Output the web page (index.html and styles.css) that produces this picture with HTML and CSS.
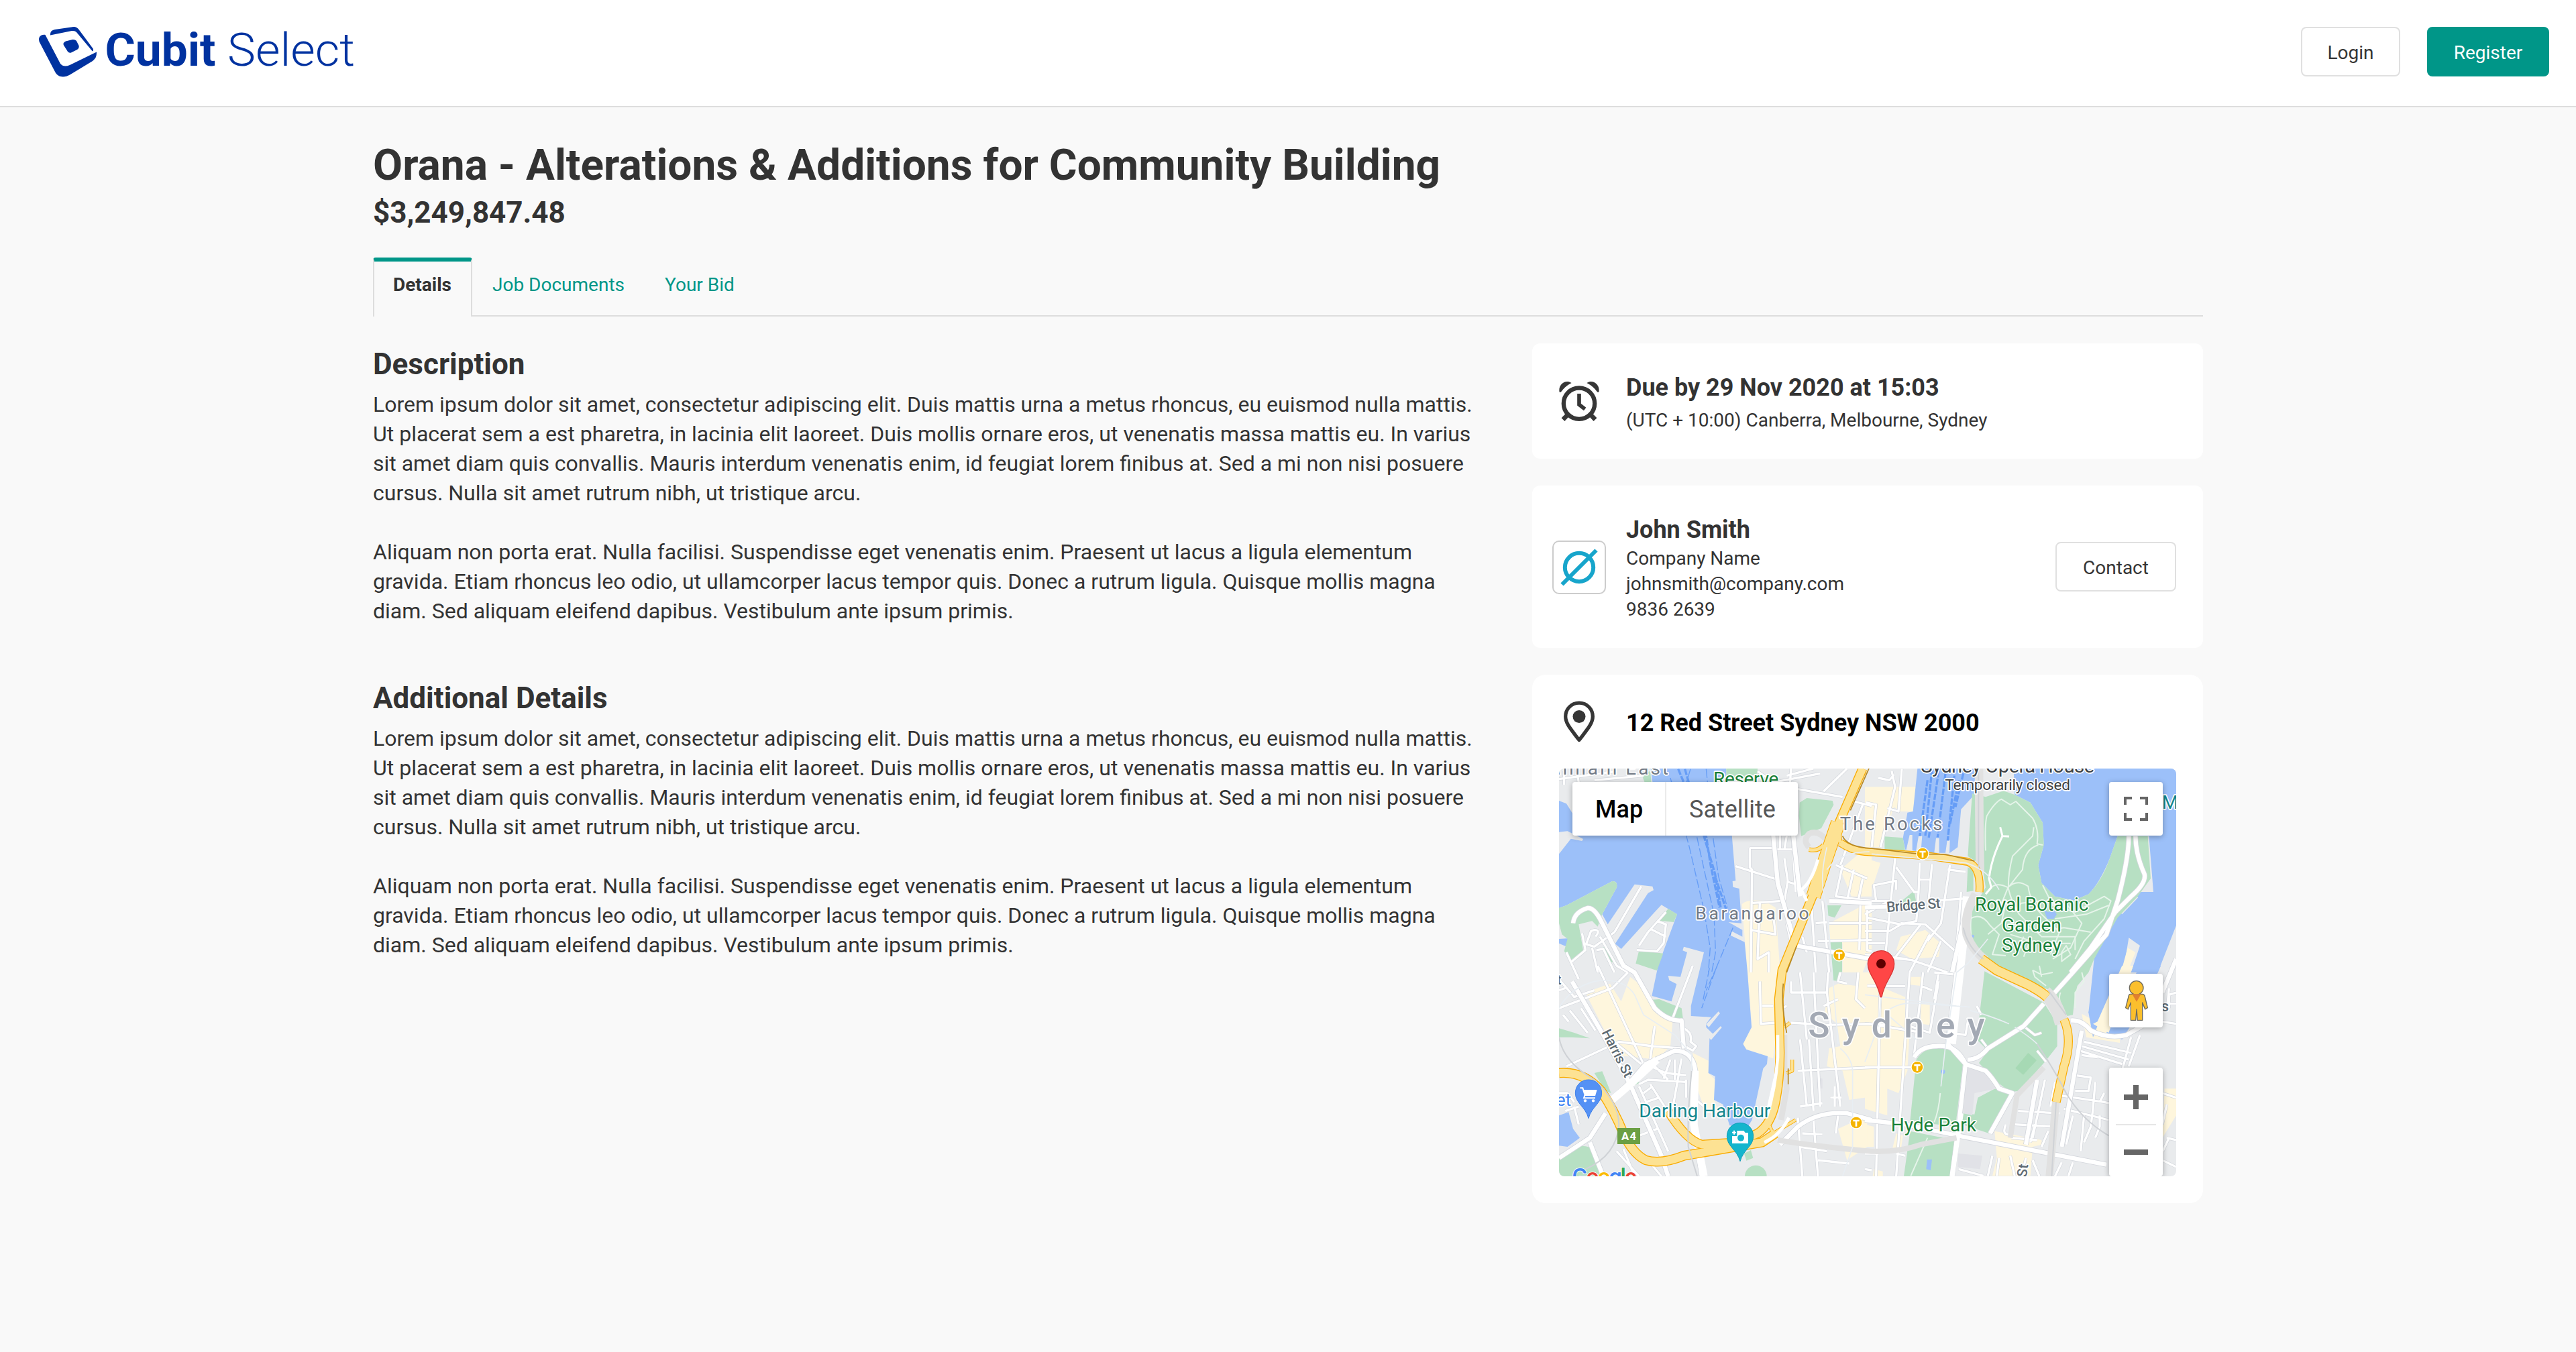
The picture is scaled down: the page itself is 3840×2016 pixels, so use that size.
FILE: index.html
```html
<!DOCTYPE html>
<html lang="en">
<head>
<meta charset="utf-8">
<title>Cubit Select</title>
<link rel="stylesheet" href="styles.css">
</head>
<body>
<header class="header">
  <svg class="logo" viewBox="0 0 480 80" role="img" aria-label="Cubit Select">
    <g class="logo-mark">
      <path d="M0 19C0 14 4 11 9.500 12L32 55Q37 61 46 57L86 37.500C86 44 85 47 80 51L47 71C37 77 28 75 24 67L2 25Q0 22 0 19Z"/>
      <path d="M17 12C17 7 19 5 24 4L50 .2C56-.5 58 2 61 6L81 33V36.500L79 35.500L56 8Q54 5.500 49 6L17 12.500Z"/>
      <path d="M40 21.500L50 19Q54 18.500 56 21L59.500 28Q60.500 31.500 57 34L48 38.500Q45 39.500 43 37L37 27.500Q35 24 40 21.500Z"/>
    </g>
    <text class="logo-bold" x="98.500" y="57.500" textLength="165" lengthAdjust="spacingAndGlyphs">Cubit</text>
    <text class="logo-light" x="281" y="57.500" textLength="190" lengthAdjust="spacingAndGlyphs">Select</text>
  </svg>
  <nav class="header-actions">
    <button class="button button-login">Login</button>
    <button class="button button-primary">Register</button>
  </nav>
</header>

<main class="page">
  <h1 class="title">Orana - Alterations &amp; Additions for Community Building</h1>
  <p class="price">$3,249,847.48</p>
  <nav class="tabs">
    <a class="tab tab-active">Details</a>
    <a class="tab">Job Documents</a>
    <a class="tab">Your Bid</a>
  </nav>

  <div class="columns">
    <div class="description">
      <section class="section">
        <h2 class="section-title">Description</h2>
        <p class="text">Lorem ipsum dolor sit amet, consectetur adipiscing elit. Duis mattis urna a metus rhoncus, eu euismod nulla mattis.<br>Ut placerat sem a est pharetra, in lacinia elit laoreet. Duis mollis ornare eros, ut venenatis massa mattis eu. In varius<br>sit amet diam quis convallis. Mauris interdum venenatis enim, id feugiat lorem finibus at. Sed a mi non nisi posuere<br>cursus. Nulla sit amet rutrum nibh, ut tristique arcu.</p>
        <p class="text">Aliquam non porta erat. Nulla facilisi. Suspendisse eget venenatis enim. Praesent ut lacus a ligula elementum<br>gravida. Etiam rhoncus leo odio, ut ullamcorper lacus tempor quis. Donec a rutrum ligula. Quisque mollis magna<br>diam. Sed aliquam eleifend dapibus. Vestibulum ante ipsum primis.</p>
      </section>
      <section class="section">
        <h2 class="section-title">Additional Details</h2>
        <p class="text">Lorem ipsum dolor sit amet, consectetur adipiscing elit. Duis mattis urna a metus rhoncus, eu euismod nulla mattis.<br>Ut placerat sem a est pharetra, in lacinia elit laoreet. Duis mollis ornare eros, ut venenatis massa mattis eu. In varius<br>sit amet diam quis convallis. Mauris interdum venenatis enim, id feugiat lorem finibus at. Sed a mi non nisi posuere<br>cursus. Nulla sit amet rutrum nibh, ut tristique arcu.</p>
        <p class="text">Aliquam non porta erat. Nulla facilisi. Suspendisse eget venenatis enim. Praesent ut lacus a ligula elementum<br>gravida. Etiam rhoncus leo odio, ut ullamcorper lacus tempor quis. Donec a rutrum ligula. Quisque mollis magna<br>diam. Sed aliquam eleifend dapibus. Vestibulum ante ipsum primis.</p>
      </section>
    </div>

    <aside class="sidebar">
      <section class="card card-due">
        <div class="card-icon">
          <svg class="icon-alarm" viewBox="60 34 180 180">
            <circle cx="150" cy="135" r="69.500" fill="none" stroke="#363636" stroke-width="19"/>
            <path d="M62 84C55 52 87 24 116 43Q88 57 68 84ZM238 84C245 52 213 24 184 43Q212 57 232 84Z" fill="#363636"/>
            <path d="M97 187L78 207M203 187L222 207" stroke="#363636" stroke-width="20"/>
            <path d="M150 91V140L176 160" fill="none" stroke="#363636" stroke-width="17"/>
          </svg>
        </div>
        <div class="card-text">
          <h3 class="card-title">Due by 29 Nov 2020 at 15:03</h3>
          <p class="card-line card-zone">(UTC + 10:00) Canberra, Melbourne, Sydney</p>
        </div>
      </section>

      <section class="card card-contact">
        <div class="card-icon">
          <div class="avatar">
            <svg class="icon-avatar" viewBox="0 0 80 80">
              <circle cx="40" cy="40" r="21.200" fill="none" stroke="#17a5cb" stroke-width="6"/>
              <path d="M14.500 65.500L65.500 14.500" stroke="#17a5cb" stroke-width="6"/>
            </svg>
          </div>
        </div>
        <div class="card-text">
          <h3 class="card-title">John Smith</h3>
          <p class="card-line">Company Name</p>
          <p class="card-line">johnsmith@company.com</p>
          <p class="card-line">9836 2639</p>
        </div>
        <button class="button button-contact">Contact</button>
      </section>

      <section class="card-location">
        <div class="location-head">
          <div class="card-icon">
            <svg class="icon-pin" viewBox="0 0 46 60">
              <path d="M23 2.700C11 2.700 2.700 12 2.700 23C2.700 33 10 41 23 58C36 41 43.300 33 43.300 23C43.300 12 35 2.700 23 2.700Z" fill="none" stroke="#363636" stroke-width="5.300" stroke-linejoin="round"/>
              <circle cx="23" cy="23" r="9.500" fill="#363636"/>
            </svg>
          </div>
          <h3 class="card-title address">12 Red Street Sydney NSW 2000</h3>
        </div>
        <div class="map">
          <svg class="map-canvas" viewBox="42 48 2760 1824">
            <rect class="land" x="42" y="48" width="2760" height="1824"/>

            <!-- commercial areas -->
            <g class="zone">
              <path d="M860 655Q880 630 960 640L1010 670L1030 940V1080L1000 1345L870 1300L865 1275L905 1205Z"/>
              <path d="M160 1050L270 1010L320 1090L360 980L400 1010L450 1090L550 1180L540 1290L480 1350L300 1330L240 1210Z"/>
              <path d="M640 1320L710 1355L710 1410L740 1440L735 1530L760 1590L700 1590L660 1480Z"/>
              <path d="M1250 740L1440 640V860L1400 960H1310V830H1250Z"/>
              <path d="M1300 500L1440 380V620H1350Z"/>
              <path d="M1410 130H1640L1625 240L1570 240L1540 220L1480 400L1410 400Z"/>
              <path d="M1410 450L1480 470L1450 560L1410 600Z"/>
              <path d="M1290 1010L1370 1020L1380 960H1470V1020L1590 1070V1220H1610L1600 1400L1560 1500L1510 1480V1600L1410 1570V1520L1340 1530L1310 1400L1240 1380L1250 1300L1300 1290L1285 1190L1230 1140L1250 1030Z"/>
              <path d="M1570 800L1680 770L1750 830L1740 890L1620 900L1550 860Z"/>
              <path d="M1610 980H1660V1020L1610 1015ZM1660 1100H1700V1195L1660 1190ZM1410 1640L1450 1650V1740H1410ZM1450 1840L1490 1850V1872H1445ZM1550 1680L1580 1690L1570 1760H1530Z"/>
              <path d="M1290 1660L1420 1600V1740L1330 1800Z"/>
              <path d="M2380 1145L2550 1240V1275L2400 1250Z"/>
              <path d="M1990 1670L2200 1710V1730L2160 1740L2150 1870H1980L2000 1790Z"/>
              <path d="M2750 1480H2802V1600L2740 1700Z"/>
            </g>

            <!-- water -->
            <g class="water">
              <path d="M42 192L75 205L103 250L300 230L460 108L452 48H790V90L735 110L815 345L832 550L818 552L820 578L848 585L858 740L800 735L862 770V800L812 775L810 795L872 824L885 960L903 1205L865 1280L880 1305L975 1335L972 1370L955 1390L905 1620L890 1645H805L775 1550L735 1530L740 1425L710 1410L715 1255L735 1240L700 1205V1190L722 1160L632 1155V1110L690 870L600 845L595 862L615 870L585 980L530 975L535 995L568 1012L545 1090L457 1065L485 930L570 700L500 658L470 690L320 855L293 832L440 605L465 592L460 575L380 566L260 745L235 700L300 580Q305 550 280 552L75 660L42 672Z"/>
              <path d="M1645 48L1625 240L1600 245L1580 360L1590 410L1700 425H1790L1825 400L1840 230L1900 165L1915 48Z"/>
              <path d="M2075 48H2802V750L2720 960H2620L2580 960L2490 1170L2440 1180L2410 1140L2435 900L2480 800L2500 600H2700L2680 350H2540L2505 450Q2460 560 2410 610L2345 638L2260 620L2200 560L2185 480L2210 390L2205 290L2150 200L2080 165Z"/>
              <path d="M42 810L80 808L98 828L70 842L42 830ZM42 1600L85 1585L105 1660L135 1700L80 1740L42 1735Z"/>
              <path d="M2455 920H2560L2430 1250L2410 1140ZM2640 930H2735L2670 1080L2610 1180L2560 1260L2490 1230L2555 1100Z"/>
            </g>

            <!-- wharves -->
            <g class="land">
              <path d="M42 332L80 328L150 363L145 372L95 362L42 430Z"/>
              <path d="M1595 410L1610 345H1622V420ZM1638 420L1650 350H1666L1660 424ZM1720 424L1728 360H1742V426ZM1770 426L1778 370H1790L1788 428Z"/>
              <path d="M700 1192L755 1135L762 1143L712 1205ZM712 1252L765 1200L770 1207L722 1262Z"/>
              <path d="M2555 1020L2590 805L2640 840L2600 960ZM2550 690L2610 615L2632 625L2560 700Z"/>
              <path d="M2802 770L2725 950L2620 1180L2560 1250L2802 1300Z"/>
            </g>
            <path class="zone" d="M2555 960L2585 850L2620 870L2590 945ZM2430 1190L2450 1180L2560 930H2610L2500 1230Z"/>

            <!-- parks -->
            <g class="park">
              <path d="M42 672L75 660L280 552Q305 550 300 580L235 700L215 755L190 730L130 745L150 860L95 905L65 865L80 810L55 790L42 740Z"/>
              <path d="M410 70L450 60L455 108L425 110ZM790 48H930V70L880 90L790 100Z"/>
              <path d="M530 675L570 700L555 735L490 728ZM400 862L508 875L480 952L385 920ZM240 845L262 855L288 915L265 915Z"/>
              <path d="M1118 200L1150 180L1265 192L1270 210L1215 315L1125 350L1115 260Z"/>
              <path d="M1498 352L1580 358L1590 418L1498 410ZM1240 660H1305L1275 715L1240 705ZM1253 822H1308V958H1262Z"/>
              <path d="M1575 640L1630 595L1640 650L1620 680L1580 665Z"/>
              <path d="M1265 930H1298V1000L1265 995ZM455 1082L490 1080L590 1120L597 1170L545 1165L500 1140Z"/>
              <path d="M42 1210L110 1230L180 1255L100 1250L42 1250ZM200 1410L235 1402L275 1500L250 1490ZM370 1440L395 1430L400 1455L380 1465Z"/>
              <path d="M42 1780Q110 1720 180 1742L225 1850L230 1872H42ZM870 1770L900 1755L910 1790L880 1802Z"/>
              <circle cx="922" cy="1872" r="49"/>
              <path d="M1890 160L1950 175L2030 148L2080 165L2150 200L2205 290L2210 390L2185 480L2200 560L2260 620L2345 638L2410 610Q2470 550 2505 450L2540 350H2675L2688 540L2630 620L2540 715L2480 820L2435 900L2410 960L2360 1020L2350 1060L2340 1150L2315 1155L2240 1040L2020 960L1880 830L1890 680L1950 580L1935 480L1870 440L1880 290Z"/>
              <path d="M1870 490L1895 500V595L1865 600Z"/>
              <path d="M1945 955L2210 1095L2270 1190V1290L2215 1360L2100 1490L2060 1495L2000 1450L1920 1365L1960 1310L1910 1260Z"/>
              <path d="M1640 1350Q1670 1300 1730 1298L1790 1305L1848 1370L1815 1650L1612 1625Z"/>
              <path d="M1612 1670L1810 1710L1790 1872H1584Z"/>
              <path d="M1915 1520L2000 1475L2060 1505L2020 1570L1965 1680L1845 1640V1590L1900 1595Z"/>
            </g>
            <path d="M2083 1388L2140 1320L2178 1353L2118 1418Z" fill="#a6d9b4"/>
            <path class="water" d="M2210 680L2230 690L2255 680L2268 700L2255 720H2225ZM1688 1797H1710L1704 1845L1684 1840Z"/>
            <circle class="water" cx="1759" cy="1404" r="10"/>
            <circle class="water" cx="1892" cy="798" r="7"/>
            <g fill="#e1e2e7">
              <path d="M1865 1370L1960 1420L2000 1480L1900 1500L1890 1600L1850 1590ZM1825 1770L1935 1780L1925 1840L1825 1830ZM1195 1430L1220 1435V1480H1195Z"/>
            </g>

            <!-- ferry routes -->
            <g class="ferry">
              <path d="M540 90L625 400L690 680L718 850L710 960M630 50L612 110L660 360L735 700L742 870L725 960M700 50L730 350L755 530L795 670M820 760L745 940L680 1120M715 940L685 1090M750 930L700 1040"/>
            </g>
            <g class="ferry-dense">
              <path d="M575 50L700 350L720 480L760 670M605 50L690 350L740 520L765 670M740 530L790 680"/>
              <path d="M1710 50L1680 350M1740 60L1695 360M1770 70L1735 355M1810 80L1780 370M1830 100L1790 300M1690 100L1655 350M1850 70L1815 220"/>
            </g>

            <!-- paths in the parks -->
            <g class="path">
              <path d="M1950 415Q1945 300 1955 260Q1990 200 2020 185L2060 210L2085 195L2160 270Q2190 320 2180 385L2205 390"/>
              <path d="M2165 310L2160 350L2070 440Q2050 520 2052 575L2010 680M2185 390Q2120 410 2115 500L2055 575"/>
              <path d="M1975 580Q2000 555 2050 580Q2090 540 2140 575Q2150 650 2200 700L2280 780L2240 880"/>
              <path d="M2205 570L2250 660L2350 690L2480 620L2510 640L2480 720L2390 820L2350 900M2050 580Q2070 660 2100 700L2200 800H2350V860"/>
              <path d="M1890 870L1880 720Q1930 690 1970 750L2010 790L1980 880L2040 885M2260 720L2400 700L2500 660M2110 740L2180 780L2300 760L2420 780M2300 640L2380 740L2330 850L2250 900M2070 690L2110 650L2200 640L2280 660"/>
              <path d="M2160 950L2200 970L2250 960M2200 980L2190 930M2160 950L2170 980L2220 1020M2060 790L2190 830L2330 830M1980 640L2040 650L2020 740L1960 790"/>
              <path d="M2120 800L2080 880M2150 810L2120 890M2290 870L2310 840L2330 880L2290 910Z"/>
              <path d="M2285 1050Q2270 1080 2300 1130M2380 960L2390 1000L2350 1050V1120"/>
              <path d="M1747 1500Q1740 1580 1720 1630M1690 1700L1615 1870"/>
            </g>
            <path d="M2015 310L2025 350L2055 352M2025 350Q1975 450 1965 540L1975 580L1950 610" fill="none" stroke="#fff" stroke-width="9"/>

            <!-- streets -->
            <g class="street-edge">
              <g id="streets">
                <path d="M42 95L300 60M65 60V120M120 48L130 110M200 100L420 80M895 405V490L905 500L900 960M895 403H1005M832 485L1020 545M930 60L1000 110L1210 70M1060 80L1180 48M1080 48L1075 110M1110 140L1310 175M1225 150L1330 48M1030 345V405M1060 350L1050 410M1085 345L1100 600M1005 410H1090M1050 450L1065 550L1050 640M1065 555L1100 565M900 650L1040 640M940 650L930 900L980 870V960M1000 700L1010 790L900 770M1060 740L1085 850M1130 800L1150 870M1170 640L1190 960M1190 740L1240 735M1200 820L1440 815M1220 640L1250 960M1250 740L1440 740M1280 480L1420 540M1310 480L1280 620L1440 640M1360 500L1330 640M1400 540L1380 640M1340 190L1440 215M1400 210L1300 480M1420 640V860L1440 865M1390 640L1385 860M1410 880L1600 900"/>
                <path d="M1415 200L1460 210L1440 400M1530 60L1545 130L1480 400M1470 90L1520 100L1540 75M1510 225L1560 240L1575 50M1410 700L1520 640H1410M1460 640L1450 570L1550 550V590M1545 450L1500 900M1550 490L1630 600L1650 600L1640 730L1570 745L1420 715M1655 470L1650 600M1710 475L1695 640M1790 480L1750 740L1690 820M1655 545H1700M1780 500L1860 510M1700 640L1850 630M1410 775H1520L1580 740M1570 740L1680 745L1820 870M1660 745L1540 900M1700 790L1610 960M1750 820L1690 960M1480 890L1620 905L1780 960M1420 830H1500M1840 600L1820 850"/>
                <path d="M1080 1000V1050H1240L1245 960M940 1000L945 1190L1010 1185M950 1110H1000M1080 1185L1240 1195L1430 1190M1120 960L1150 1260M1180 960L1210 1560M1225 1110L1290 1080M1060 1110L1040 1120M1240 1050L1300 1560M1110 1400L1440 1385M1120 1260L1150 1560M1300 960L1290 1000L1330 1010M1380 960L1370 1080L1410 1120M1160 1260L1180 1580M1275 1470V1560M1255 1520H1305M1120 1560L1220 1545M1110 1610L1130 1872M1180 1620L1200 1872M1130 1680L1220 1685M1120 1740L1240 1760M1200 1800L1340 1815M1290 1600L1280 1680M1410 1190L1520 1195M1480 960L1460 1872M1410 1385H1620M1610 960L1550 1872M1420 1020L1590 1022M1670 960L1630 1330M1660 1020L1710 1040M1610 1200L1700 1230L1740 1000M1740 960L1720 1080M1720 960L1820 970M1410 1770H1470M1550 1770L1590 1780M1800 1230L1860 1240L1870 1180M1410 1840L1440 1845M1650 1310L1640 1340M1430 1190L1640 1225"/>
                <path d="M42 990L110 1070L200 1040M42 1040L70 1030M42 1120L280 1030L350 960M75 870L130 990M90 1130L170 1230M60 1150L85 1180M140 1120L205 1220M95 915L160 860L145 785M150 830L200 845L290 780L410 575M190 850L215 960M205 800Q230 770 200 770L185 775L165 830M210 860L240 855L290 960M225 800L300 930L350 960M550 1165L640 930M450 765L520 800M400 840L440 780L520 690M480 730L520 745L510 830L480 865L390 860M75 1380L310 1270L460 1290L600 1300M300 1280L410 1370M470 1200L450 1350M430 1370L520 1410L610 1420M470 1380L530 1440M540 1350L510 1435M590 1345L550 1570M610 1440V1520M560 1350V1440M400 1460L440 1440L610 1450M400 1470L530 1760M450 1460L540 1600M420 1500L460 1470M430 1540L490 1520M42 1500L80 1500L110 1540M130 1560L70 1580M110 1560L130 1640M300 1760L400 1872M330 1750L380 1872M400 1690L480 1660M440 1800L500 1872M600 1210Q640 1230 630 1270L655 1290L640 1310L605 1290M655 1530L690 1560M215 930L420 1370"/>
                <path d="M1930 1150L1910 1110M1930 1260L1960 1300M2120 1200L2170 1240L2200 1230M2180 1310L2220 1360M2095 1580L2280 1590M2080 1640L2260 1650M2065 1700L2180 1710M2215 1440L2190 1560M2260 1450L2240 1560M2190 1560L2160 1700M2280 1510L2480 1540L2570 1560M2300 1570L2500 1620M2350 1420L2420 1430L2410 1490H2350M2380 1330L2450 1340M2390 1270L2600 1320M2380 1290L2590 1350M2370 1310L2560 1370M2600 1250L2560 1400M2640 1240L2590 1380M2440 1450L2430 1570L2420 1650L2390 1720M2480 1500L2460 1540M2460 1600V1650L2440 1700M2340 1600L2310 1730M2390 1600L2375 1760M2230 1670L2200 1740M2170 1640L2150 1720M2040 1640Q2020 1690 2060 1685M1980 1780L1960 1870M2060 1780L2080 1872M2010 1790L2000 1870M2130 1790L2110 1872M1830 1840L1940 1870M2160 1800L2190 1872M2290 1810L2260 1872M2340 1810L2320 1872M2802 1050L2770 1060V1120M2720 1100H2802M2770 1030L2760 1130M2740 1500L2802 1520M2760 1550L2740 1640M2760 1700L2802 1710M2742 1760L2770 1700M2740 1800L2802 1830M2740 1180L2802 1190"/>
              </g>
            </g>
            <use class="street" href="#streets"/>

            <!-- wider streets -->
            <g class="avenue-edge">
              <g id="avenues">
                <path d="M100 1000L240 1240L360 1460L500 1780L530 1872M42 1790L180 1700L250 1590M285 1520L360 1450L430 1370L560 1310Q640 1310 652 1400L640 1600L680 1872M105 740Q110 690 170 672Q200 670 230 730L330 930L380 960L470 1120Q530 1180 590 1175L600 1300M180 1720L240 1872M1820 960L1780 1280L1860 1370L1830 1640L1800 1872M1410 1620L1590 1640L1850 1695L2490 1820M1410 670L1510 665M1860 690L1800 960M1250 640L1440 650M1000 345L1020 560L1100 840L1440 900M1090 350L1120 620"/>
                <path d="M2180 1440L2130 1730M2380 1220L2290 1740M2330 960L2420 850L2530 690L2600 620Q2670 560 2660 520Q2620 430 2620 350M2590 350Q2590 450 2540 640L2490 790L2340 960L2250 1060M1870 1350Q1920 1350 1960 1300L2120 1200L2210 1100M2330 1175Q2380 1170 2420 1220Q2500 1260 2580 1240L2650 1200M2740 1050L2802 900M1630 1340Q1660 1290 1730 1290Q1820 1280 1860 1370L1950 1400Q1980 1430 2010 1480L2070 1500L1970 1680M1030 1730L1110 1650Q1200 1580 1330 1590L1440 1620"/>
              </g>
            </g>
            <use class="avenue" href="#avenues"/>
            <g class="avenue">
              <path d="M1865 620L1850 830L1800 1280M650 1400L645 1640L690 1872M280 1530L350 1470L480 1350" stroke-width="34"/>
              <path d="M1020 1120V1400L970 1620M1840 1590L1800 1872" stroke-width="22"/>
            </g>

            <!-- tunnels -->
            <g class="tunnel">
              <path d="M1920 48L1922 300L1925 510" stroke-width="38"/>
              <path d="M1905 610Q1850 700 1865 790Q1890 860 1950 905" stroke-width="38"/>
              <path d="M2215 1050Q2270 1100 2290 1190" stroke-width="62"/>
              <path d="M2265 1530L2235 1872" stroke-width="34"/>
              <path d="M1020 1710Q1200 1740 1440 1760Q1560 1765 1660 1730L1820 1700M2210 1385L2090 1510L2060 1700" stroke-width="24"/>
              <path d="M1050 1240V1380L1060 1480L1035 1620" stroke-width="26"/>
              <path d="M1240 370Q1200 320 1160 340Q1130 370 1160 400" stroke-width="26"/>
              <path d="M1245 375L1440 430" stroke-width="20"/>
              <path d="M1330 190L1400 60" stroke-width="22"/>
            </g>

            <!-- motorways -->
            <g class="motorway-edge">
              <path d="M1400 48L1290 300L1200 560L1040 950L1025 1080L1030 1320Q1030 1440 1010 1540Q990 1640 930 1680L840 1720L680 1730Q610 1710 530 1580" stroke-width="42"/>
              <path d="M1290 290L1225 480L1180 620" stroke-width="66"/>
              <path d="M42 1410Q150 1400 230 1490Q290 1580 330 1680Q370 1770 430 1800Q500 1820 600 1780L950 1720L1010 1680" stroke-width="44"/>
              <path d="M1300 380Q1350 415 1410 420L1700 440L1870 465Q1930 490 1922 600" stroke-width="36"/>
              <path d="M1300 380Q1290 320 1300 300M1160 410Q1200 420 1225 390" stroke-width="20"/>
              <path d="M1930 900L2000 950L2130 1010Q2190 1040 2225 1070" stroke-width="46"/>
              <path d="M2300 1170Q2340 1260 2300 1380L2265 1540" stroke-width="40"/>
              <path d="M970 1620L1000 1680L1100 1620M1085 1350V1400L1060 1410M1050 1205L1075 1185" stroke-width="16"/>
            </g>
            <g class="motorway">
              <path d="M1400 48L1290 300L1200 560L1040 950L1025 1080L1030 1320Q1030 1440 1010 1540Q990 1640 930 1680L840 1720L680 1730Q610 1710 530 1580" stroke-width="34"/>
              <path d="M1290 290L1225 480L1180 620" stroke-width="60"/>
              <path d="M42 1410Q150 1400 230 1490Q290 1580 330 1680Q370 1770 430 1800Q500 1820 600 1780L950 1720L1010 1680" stroke-width="36"/>
              <path d="M1300 380Q1350 415 1410 420L1700 440L1870 465Q1930 490 1922 600" stroke-width="28"/>
              <path d="M1300 380Q1290 320 1300 300M1160 410Q1200 420 1225 390" stroke-width="14"/>
              <path d="M1930 900L2000 950L2130 1010Q2190 1040 2225 1070" stroke-width="38"/>
              <path d="M2300 1170Q2340 1260 2300 1380L2265 1540" stroke-width="33"/>
              <path d="M970 1620L1000 1680L1100 1620M1085 1350V1400L1060 1410M1050 1205L1075 1185" stroke-width="11"/>
            </g>
            <path d="M1428 48L1345 235M1105 840L1060 960M1310 350Q1330 400 1440 405L1650 430L1770 432L1900 462M1045 1010Q1035 1100 1060 1230M1067 1390V1460" fill="none" stroke="#b58826" stroke-width="5"/>
            <path d="M1200 455Q1170 560 1125 590L1150 640M1020 1240V1340Q1010 1480 970 1610M960 1720Q1030 1690 1070 1610" fill="none" stroke="#fff" stroke-width="14"/>

            <!-- railways -->
            <g class="rail">
              <path d="M42 1250Q60 1360 200 1440Q310 1540 310 1640Q300 1780 160 1840M635 1400Q615 1600 620 1740L660 1872M2180 1280Q2260 1400 2310 1500Q2380 1620 2500 1690M1918 60V500M1850 760Q1870 850 1940 900M2230 1040L2310 1150M2265 1540L2245 1872"/>
              <path class="rail-light" d="M42 1120Q90 1030 200 1000Q330 980 380 1060L420 1150L560 1240L635 1330V1400M1240 400Q1200 560 1240 660L1290 1280M1430 420Q1300 420 1240 500M1300 1300Q1360 1350 1355 1420V1740L1310 1872M1440 430L1860 470Q1960 500 2010 590M1960 810L1870 920L1820 960L1770 1290M1500 900L1470 1200L1410 1360M1640 1260L1500 1140Q1560 1090 1640 1098L1880 1115M1410 1060L1820 1110M1880 1130Q1960 1150 2055 1190M2080 1205Q2150 1250 2180 1280M1770 1290L1750 1470"/>
            </g>

            <!-- place labels -->
            <g class="label label-area">
              <text x="540" y="75" font-size="84" text-anchor="end" letter-spacing="9">Balmain East</text>
              <text x="652" y="722" font-size="80" textLength="508">Barangaroo</text>
              <text x="1298" y="323" font-size="82" textLength="458">The Rocks</text>
              <text class="label-city" x="1156" y="1250" font-size="160" textLength="790">Sydney</text>
            </g>
            <g class="label label-park">
              <text x="732" y="124" font-size="84" textLength="292">Reserve</text>
              <text x="1902" y="683" font-size="84" textLength="508">Royal Botanic</text>
              <text x="2022" y="776" font-size="84" textLength="266">Garden</text>
              <text x="2022" y="868" font-size="84" textLength="266">Sydney</text>
              <text x="1526" y="1672" font-size="84" textLength="382">Hyde Park</text>
            </g>
            <g class="label label-dark">
              <text x="1660" y="66" font-size="88" textLength="776">Sydney Opera House</text>
              <text x="1768" y="143" font-size="68" textLength="560">Temporarily closed</text>
            </g>
            <g class="label label-road">
              <text transform="translate(1508 690) rotate(-4.500)" font-size="64" textLength="242">Bridge St</text>
              <text transform="translate(232 1228) rotate(63)" font-size="62" textLength="232">Harris St</text>
              <text transform="translate(2132 1878) rotate(-82)" font-size="62">St</text>
              <text x="2735" y="1134" font-size="66">s</text>
              <text x="32" y="1014" font-size="60">t</text>
            </g>
            <g class="label label-poi">
              <text x="400" y="1608" font-size="84" textLength="588">Darling Harbour</text>
              <text x="2738" y="227" font-size="84">M</text>
              <text class="label-shop" x="97" y="1557" font-size="80" text-anchor="end">Market</text>
            </g>
            <rect x="303" y="1656" width="102" height="72" fill="#6b9f44"/>
            <text x="321" y="1710" font-size="50" font-weight="700" fill="#fff" textLength="66">A4</text>

            <!-- stations -->
            <g class="station">
              <circle cx="1295" cy="882" r="27"/><path d="M1281 873H1309M1295 873V899"/>
              <circle cx="1668" cy="429" r="27"/><path d="M1654 420H1682M1668 420V446"/>
              <circle cx="1644" cy="1384" r="27"/><path d="M1630 1375H1658M1644 1375V1401"/>
              <circle cx="1371" cy="1632" r="27"/><path d="M1357 1623H1385M1371 1623V1649"/>
            </g>

            <!-- shop pin -->
            <path d="M174 1440C140 1440 115 1466 115 1500C115 1545 160 1560 174 1613C188 1560 233 1545 233 1500C233 1466 208 1440 174 1440Z" fill="#5491f5" stroke="#4081e8" stroke-width="3"/>
            <path d="M136 1477H148L158 1509H202L208 1488H153M157 1510L153 1522H204" fill="none" stroke="#fff" stroke-width="6"/>
            <path d="M152 1486H208L200 1511H160Z" fill="#fff"/>
            <circle cx="159" cy="1534" r="6.500" fill="#fff"/><circle cx="195" cy="1534" r="6.500" fill="#fff"/>

            <!-- camera pin -->
            <path d="M852 1633C818 1633 793 1659 793 1693C793 1738 838 1753 852 1805C866 1753 911 1738 911 1693C911 1659 886 1633 852 1633Z" fill="#14b5cd" stroke="#0f9db6" stroke-width="3"/>
            <path d="M816 1692H838V1668H868L875 1677H888V1725H816Z" fill="#fff"/>
            <circle cx="855" cy="1700" r="15" fill="#14b5cd"/>
            <path d="M816 1676H834M825 1667V1685" stroke="#fff" stroke-width="6"/>

            <!-- job location marker -->
            <path d="M1482 863C1449 863 1423 889 1423 922C1423 968 1466 1000 1478 1066Q1482 1076 1486 1066C1498 1000 1541 968 1541 922C1541 889 1515 863 1482 863Z" fill="#ff4646" stroke="#d73534" stroke-width="4"/>
            <circle cx="1482" cy="921" r="21" fill="#5c0000"/>

            <text class="attribution" x="100" y="1912" font-size="104" textLength="290"><tspan fill="#4285f4">G</tspan><tspan fill="#ea4335">o</tspan><tspan fill="#fbbc04">o</tspan><tspan fill="#4285f4">g</tspan><tspan fill="#34a853">l</tspan><tspan fill="#ea4335">e</tspan></text>
          </svg>

          <div class="map-control map-types">
            <span class="map-type map-type-active">Map</span>
            <span class="map-type">Satellite</span>
          </div>
          <div class="map-control map-fullscreen">
            <svg class="map-icon" viewBox="0 0 80 80"><path d="M24 34V24H34M46 24H56V34M56 46V56H46M34 56H24V46" fill="none" stroke="#666" stroke-width="4"/></svg>
          </div>
          <div class="map-control map-pegman">
            <svg class="map-icon" viewBox="1092 36 240 240">
              <g fill="#fbbf2d" stroke="#6f6b5d" stroke-width="4" stroke-linejoin="round">
                <path d="M1186 127H1242Q1250 128 1252 138L1264 188L1253 195L1241 165V244H1219L1215 195L1211 244H1189V165L1177 195L1166 188L1179 138Q1180 128 1186 127Z"/>
                <circle cx="1214" cy="99" r="31"/>
              </g>
              <path d="M1195 127H1235L1215 161Z" fill="#e07f2f"/>
            </svg>
          </div>
          <div class="map-control map-zoom">
            <svg class="map-zoom-icon" viewBox="0 0 80 162"><path d="M22 44H58M40 26V62M22 126H58" stroke="#666" stroke-width="8"/><path d="M10 85H70" stroke="#e6e6e6" stroke-width="2"/></svg>
          </div>
        </div>
      </section>
    </aside>
  </div>
</main>
</body>
</html>
```
FILE: styles.css
```css
* {
  box-sizing: border-box;
}

body {
  margin: 0;
  min-height: 2016px;
  background: #f9f9f9;
  color: #333;
  font-family: Roboto, "Liberation Sans", sans-serif;
  font-size: 28px;
}

h1,
h2,
h3,
p {
  margin: 0;
}

svg {
  display: block;
}

.header {
  display: flex;
  align-items: flex-start;
  justify-content: space-between;
  height: 160px;
  padding: 40px 40px 0 58px;
  background: #fff;
  border-bottom: 2px solid #ddd;
}

.logo {
  width: 480px;
  height: 80px;
  overflow: visible;
  fill: #0032a0;
}

.logo-bold {
  font-size: 69px;
  font-weight: 700;
}

.logo-light {
  font-size: 69px;
  font-weight: 300;
}

.header-actions {
  display: flex;
  gap: 40px;
}

.button {
  height: 74px;
  padding: 3px 0 0;
  border: 2px solid #e0e0e0;
  border-radius: 8px;
  background: #fff;
  color: #363636;
  font: 400 28px/38px Roboto, "Liberation Sans", sans-serif;
}

.button-login {
  width: 148px;
}

.button-contact {
  width: 180px;
}

.button-primary {
  width: 182px;
  border-color: #009688;
  background: #009688;
  color: #fff;
}

.page {
  width: 2728px;
  margin: 0 auto;
  padding-top: 49px;
}

.title {
  font-size: 64px;
  font-weight: 700;
  line-height: 76px;
}

.price {
  margin-top: 6px;
  font-size: 44px;
  font-weight: 700;
  line-height: 52px;
}

.tabs {
  display: flex;
  height: 88px;
  margin-top: 41px;
  border-bottom: 2px solid #ddd;
}

.tab {
  height: 86px;
  padding: 23px 30px 0;
  color: #009688;
  font-size: 28px;
  line-height: 36px;
}

.tab-active {
  width: 148px;
  height: 88px;
  padding: 17px 0 0 28px;
  border: solid #ddd;
  border-width: 6px 2px 0 2px;
  border-top-color: #009688;
  border-radius: 4px 4px 0 0;
  background: #f9f9f9;
  color: #333;
  font-weight: 700;
}

.columns {
  display: flex;
  justify-content: space-between;
  margin-top: 40px;
}

.description {
  width: 1680px;
  padding-top: 4px;
}

.section {
  margin-bottom: 81px;
}

.section-title {
  margin-bottom: 11px;
  font-size: 44px;
  font-weight: 700;
  line-height: 54px;
}

.text {
  font-size: 32px;
  line-height: 44px;
  white-space: nowrap;
}

.text + .text {
  margin-top: 44px;
}

.sidebar {
  display: flex;
  flex-direction: column;
  gap: 40px;
  width: 1000px;
}

.card {
  display: flex;
  padding: 0 40px 0 30px;
  border-radius: 12px;
  background: #fff;
}

.card-due {
  height: 172px;
}

.card-contact {
  align-items: center;
  height: 242px;
}

.card-icon {
  display: flex;
  flex: none;
  align-items: center;
  justify-content: center;
  width: 80px;
}

.card-text {
  flex: 1;
  align-self: flex-start;
  padding: 44px 0 0 30px;
}

.card-title {
  color: #333;
  font-size: 36px;
  font-weight: 700;
  line-height: 44px;
}

.card-line {
  font-size: 28px;
  line-height: 38px;
}

.card-title + .card-line {
  margin-top: 2px;
}

.card-title + .card-zone {
  margin-top: 8px;
}

.icon-alarm {
  width: 60px;
  height: 60px;
}

.avatar {
  width: 80px;
  height: 80px;
  margin-top: 2px;
  border: 2px solid #ccc;
  border-radius: 10px;
}

.icon-avatar {
  width: 80px;
  height: 80px;
  margin: -2px;
}

.icon-pin {
  width: 46px;
  height: 61px;
}

.card-location {
  height: 788px;
  padding: 39px 40px 40px;
  border-radius: 20px;
  background: #fff;
}

.location-head {
  display: flex;
  align-items: flex-start;
  height: 101px;
  margin-left: -10px;
}

.address {
  padding: 11px 0 0 30px;
  color: #000;
}

.map {
  position: relative;
  width: 920px;
  height: 608px;
  overflow: hidden;
  border-radius: 8px;
}

.map-canvas {
  width: 920px;
  height: 608px;
}

.land {
  fill: #e9ebed;
}

.zone {
  fill: #fef6dd;
}

.water {
  fill: #9cc0f9;
}

.park {
  fill: #b7e0c3;
}

.street,
.street-edge,
.avenue,
.avenue-edge,
.path,
.tunnel,
.motorway,
.motorway-edge,
.rail,
.ferry,
.ferry-dense {
  fill: none;
  stroke-linejoin: round;
}

.ferry {
  stroke: #669df6;
  stroke-width: 4;
  stroke-dasharray: 40 12;
}

.ferry-dense {
  stroke: #669df6;
  stroke-width: 10;
  stroke-dasharray: 28 6;
}

.path {
  stroke: #e6f4ea;
  stroke-width: 6;
}

.street-edge {
  stroke: #d3d6dc;
  stroke-width: 14;
}

use.street {
  stroke: #fff;
  stroke-width: 10;
}

.avenue-edge {
  stroke: #d3d6dc;
  stroke-width: 24;
}

.avenue {
  stroke: #fff;
  stroke-width: 19;
}

/* The reused groups take their stroke from the element that draws them. */
#streets,
#avenues {
  stroke: inherit;
}

.tunnel {
  stroke: #e1e1e1;
}

.motorway-edge {
  stroke: #f9ab00;
}

.motorway {
  stroke: #fde293;
}

.rail {
  stroke: #cfd2d6;
  stroke-width: 6;
}

.rail-light {
  stroke: #e8eef3;
  stroke-width: 5;
}

.label {
  paint-order: stroke;
  stroke: #fff;
  stroke-width: 10;
  stroke-linejoin: round;
}

.label-area {
  fill: #717985;
}

.label-city {
  fill: #a3a9b4;
  font-weight: 500;
}

.label-park {
  fill: #188038;
}

.label-dark {
  fill: #3c4043;
}

.label-road {
  fill: #5f6b73;
  font-weight: 500;
}

.label-poi {
  fill: #12858d;
}

.label-shop {
  fill: #4285f4;
}

.station circle {
  fill: #f5b400;
  stroke: #fff;
  stroke-width: 4;
}

.station path {
  fill: none;
  stroke: #fff;
  stroke-width: 8;
}

.attribution {
  font-weight: 500;
  paint-order: stroke;
  stroke: #fff;
  stroke-width: 5;
}

.map-control {
  position: absolute;
  border-radius: 4px;
  background: #fff;
  box-shadow: 0 2px 8px rgba(0, 0, 0, 0.3);
}

.map-types {
  top: 20px;
  left: 20px;
  display: flex;
  width: 336px;
  height: 80px;
}

.map-type {
  padding: 0 34px;
  color: #565656;
  font-size: 36px;
  line-height: 83px;
}

.map-type-active {
  width: 140px;
  border-right: 2px solid #ebebeb;
  color: #000;
  font-weight: 500;
}

.map-fullscreen {
  top: 20px;
  right: 20px;
}

.map-pegman {
  top: 306px;
  right: 20px;
}

.map-icon {
  width: 80px;
  height: 80px;
}

.map-zoom {
  top: 446px;
  right: 20px;
}

.map-zoom-icon {
  width: 80px;
  height: 162px;
}
```
